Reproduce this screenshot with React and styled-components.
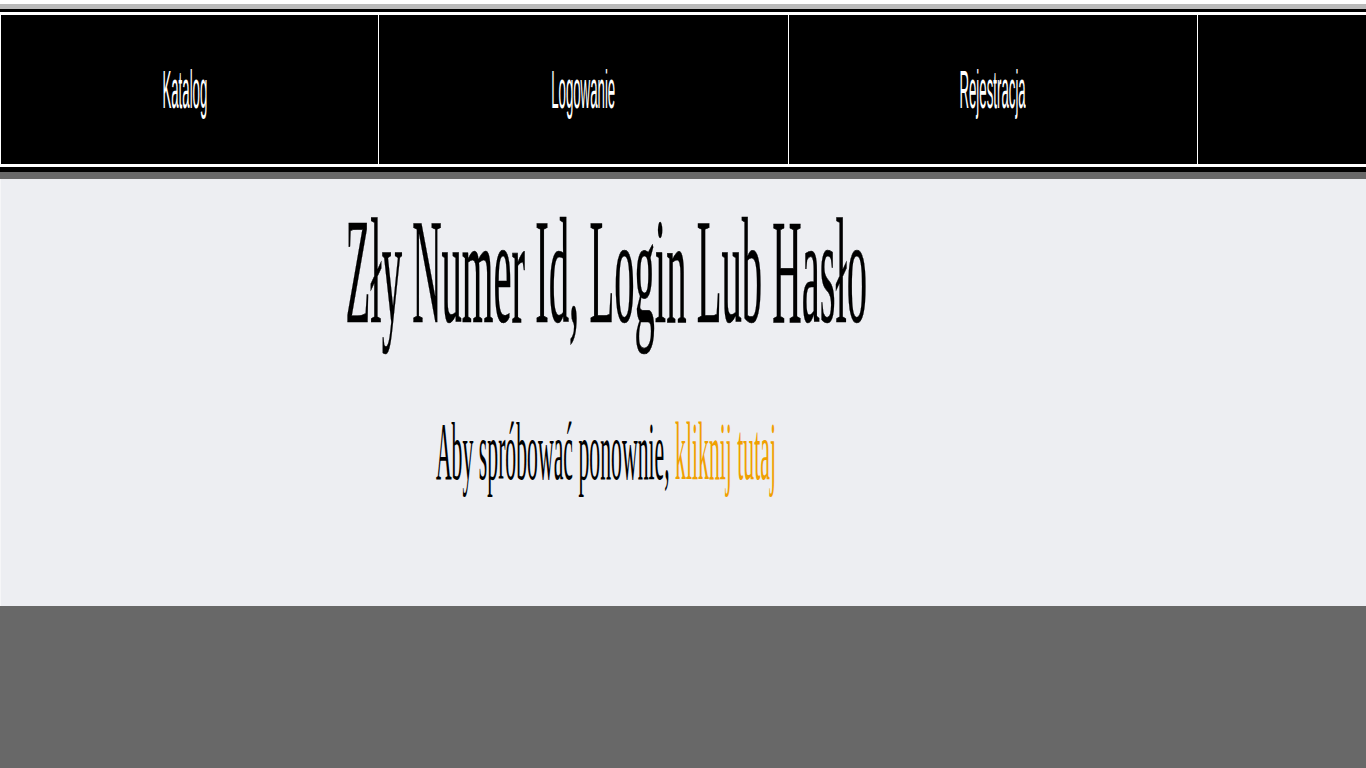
import React from "react";
import styled, { createGlobalStyle } from "styled-components";

const GlobalStyle = createGlobalStyle`
  html, body {
    margin: 0;
    padding: 0;
    background: #fff;
    overflow: hidden;
  }
`;

const links = [
  { label: "Katalog", width: "377px", shift: "10px" },
  { label: "Logowanie", width: "409px" },
  { label: "Rejestracja", width: "408px" },
  { label: "", width: "auto" },
];

export default function App() {
  return (
    <Page>
      <GlobalStyle />
      <TopStrip />
      <Nav>
        <NavRow>
          {links.map((l, i) => (
            <NavCell key={i} $width={l.width} $shift={l.shift}>
              <Squeeze>{l.label}</Squeeze>
            </NavCell>
          ))}
        </NavRow>
      </Nav>
      <GrayStrip />
      <Main>
        <Content>
          <Heading>
            <Squeeze $scale={0.271}>Zły Numer Id, Login Lub Hasło</Squeeze>
          </Heading>
          <Retry>
            <Squeeze $scale={0.262}>
              Aby spróbować ponownie, <RetryLink href="#">kliknij tutaj</RetryLink>
            </Squeeze>
          </Retry>
        </Content>
      </Main>
      <Footer />
    </Page>
  );
}

const Page = styled.div`
  min-height: 100vh;
  display: flex;
  flex-direction: column;
  padding-top: 4px;
  box-sizing: border-box;
`;

const TopStrip = styled.div`
  height: 5px;
  background: #bababa;
`;

const Nav = styled.nav`
  background: #fff;
  border-top: 3px solid #000;
  border-bottom: 5px solid #000;
  padding: 3px 0;
`;

const NavRow = styled.div`
  display: flex;
  gap: 1px;
  height: 149px;
  margin-left: 1px;
`;

const NavCell = styled.div`
  flex: ${(p) => (p.$width === "auto" ? "1" : `0 0 ${p.$width}`)};
  background: #000;
  display: flex;
  align-items: center;
  justify-content: center;
  padding-right: ${(p) => p.$shift || "0"};
  box-sizing: border-box;
  color: #fff;
  font-family: "Liberation Sans", Arial, sans-serif;
  font-size: 53px;
  line-height: 53px;
  overflow: hidden;
`;

const Squeeze = styled.span`
  display: inline-block;
  white-space: nowrap;
  transform: scaleX(${(p) => p.$scale || 0.25});
  transform-origin: center;
`;

const GrayStrip = styled.div`
  height: 7px;
  background: #686868;
`;

const Main = styled.main`
  height: 427px;
  background: #edeef2;
  border-left: 1px solid #f6f6f8;
  box-sizing: border-box;
  overflow: hidden;
`;

const Content = styled.div`
  width: 1210px;
  padding-top: 17px;
  display: flex;
  flex-direction: column;
  align-items: center;
`;

const Heading = styled.h1`
  margin: 0;
  font-family: "Liberation Serif", "Times New Roman", serif;
  font-weight: normal;
  font-size: 150px;
  line-height: 150px;
  color: #000;
  display: flex;
  justify-content: center;
  width: 100%;
  -webkit-text-stroke: 0.6px #000;
`;

const Retry = styled.p`
  margin: 64px 0 0;
  font-family: "Liberation Serif", "Times New Roman", serif;
  font-size: 83px;
  line-height: 83px;
  color: #000;
  display: flex;
  justify-content: center;
  width: 100%;
`;

const RetryLink = styled.a`
  color: #f0a000;
  text-decoration: none;
`;

const Footer = styled.footer`
  flex: 1;
  background: #686868;
`;
